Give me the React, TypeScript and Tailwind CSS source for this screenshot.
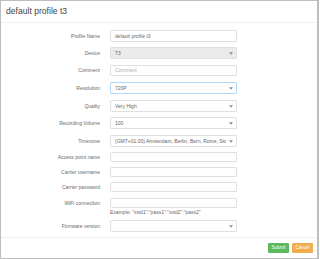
import React from "react";

type Row = {
  label: string;
  value?: string;
  placeholder?: string;
  kind: "text" | "select";
  disabled?: boolean;
  focused?: boolean;
  mt: string;
  h: string;
  help?: string;
};

const rows: Row[] = [
  { label: "Profile Name", value: "default profile t3", kind: "text", mt: "mt-[7px]", h: "h-[12px]" },
  { label: "Device", value: "T3", kind: "select", disabled: true, mt: "mt-[5px]", h: "h-[12px]" },
  { label: "Comment", placeholder: "Comment", kind: "text", mt: "mt-[6px]", h: "h-[11px]" },
  { label: "Resolution", value: "720P", kind: "select", focused: true, mt: "mt-[6px]", h: "h-[12px]" },
  { label: "Quality", value: "Very High", kind: "select", mt: "mt-[6px]", h: "h-[12px]" },
  { label: "Recording Volume", value: "100", kind: "select", mt: "mt-[5px]", h: "h-[12px]" },
  {
    label: "Timezone",
    value: "(GMT+01:00) Amsterdam, Berlin, Bern, Rome, Stockholm, Vienna",
    kind: "select",
    mt: "mt-[6px]",
    h: "h-[12px]",
  },
  { label: "Access point name", kind: "text", mt: "mt-[5px]", h: "h-[10px]" },
  { label: "Carrier username", kind: "text", mt: "mt-[5px]", h: "h-[10px]" },
  { label: "Carrier password", kind: "text", mt: "mt-[5px]", h: "h-[10px]" },
  {
    label: "WiFi connection",
    kind: "text",
    mt: "mt-[6px]",
    h: "h-[10px]",
    help: 'Example: "ssid1":"pass1":"ssid2":"pass2"',
  },
  { label: "Firmware version", kind: "select", mt: "mt-[4px]", h: "h-[12px]" },
];

function Caret() {
  return (
    <svg width="4" height="3" viewBox="0 0 4 3" className="shrink-0">
      <path d="M0 0.3 L4 0.3 L2 2.7 Z" fill="#8a8a8a" />
    </svg>
  );
}

export default function App() {
  return (
    <div
      className="w-[320px] h-[259px] bg-white overflow-hidden"
      style={{ fontFamily: '"Liberation Sans", Arial, sans-serif' }}
    >
      <div className="w-[319px] h-[259px] border-l border-t border-b border-r-2 border-[#bdbdbd] flex flex-col">
        <div className="h-[22px] border-b border-[#f0f0f0] flex items-center pl-[5px] shrink-0">
          <span className="text-[8.6px] text-[#444] leading-none">default profile t3</span>
        </div>
        <div className="flex flex-col">
          {rows.map((r) => (
            <div key={r.label} className={`${r.mt} flex flex-col`}>
              <div className="flex items-center">
                <div className="w-[99px] text-right text-[5px] text-[#6a6a6a] leading-none shrink-0">
                  {r.label}
                </div>
                <div
                  className={`ml-[10px] w-[127px] ${r.h} border ${
                    r.focused ? "border-[#b3d9f7]" : "border-[#e0e0e0]"
                  } ${r.disabled ? "bg-[#ebebeb]" : "bg-white"} rounded-[1px] flex items-center pl-[4px] pr-[3px] overflow-hidden`}
                >
                  <span
                    className={`flex-1 min-w-0 whitespace-nowrap overflow-hidden text-[5px] leading-none ${
                      r.value ? "text-[#666]" : "text-[#aaa]"
                    }`}
                  >
                    {r.value ?? r.placeholder ?? ""}
                  </span>
                  {r.kind === "select" && (
                    <span className="ml-[3px] flex items-center">
                      <Caret />
                    </span>
                  )}
                </div>
              </div>
              {r.help && (
                <div className="ml-[109px] h-[8px] flex items-center text-[5px] text-[#6a6a6a] leading-none">
                  {r.help}
                </div>
              )}
            </div>
          ))}
        </div>
        <div className="mt-[5px] border-t border-[#f0f0f0] flex justify-end items-start pt-[5px] pr-[4px] gap-[3px]">
          <div className="w-[21px] h-[10px] bg-[#5cb85c] rounded-[1px] flex items-center justify-center text-white text-[4.5px] leading-none">
            Submit
          </div>
          <div className="w-[21px] h-[10px] bg-[#f0ad4e] rounded-[1px] flex items-center justify-center text-white text-[4.5px] leading-none">
            Cancel
          </div>
        </div>
      </div>
    </div>
  );
}
